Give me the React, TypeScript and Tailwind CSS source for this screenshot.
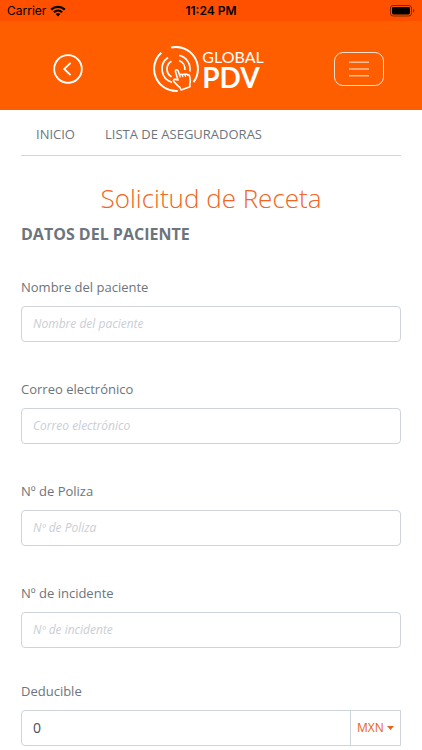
import React, { useState } from "react";

const fields = [
  { id: "nombre", label: "Nombre del paciente", type: "text" },
  { id: "correo", label: "Correo electrónico", type: "email" },
  { id: "poliza", label: "Nº de Poliza", type: "text" },
  { id: "incidente", label: "Nº de incidente", type: "text" },
];

const WifiIcon = () => (
  <svg className="w-4 h-3" viewBox="0 0 16 12" fill="none" stroke="currentColor" strokeWidth="2.2">
    <path d="M1.2 4.6a9.8 9.8 0 0 1 13.6 0" />
    <path d="M3.9 7.3a6 6 0 0 1 8.2 0" />
    <path d="M8 11.4 5.7 9.1a3.3 3.3 0 0 1 4.6 0Z" fill="currentColor" stroke="none" />
  </svg>
);

const BatteryIcon = () => (
  <svg className="w-[25px] h-3" viewBox="0 0 25 12" fill="none">
    <rect x="0.5" y="0.5" width="21" height="10.5" rx="2.6" stroke="#000" strokeOpacity="0.5" />
    <rect x="2" y="2" width="18" height="7.5" rx="1.4" fill="#000" />
    <path d="M23 4v3.6c.8-.3 1.3-1 1.3-1.8S23.8 4.3 23 4Z" fill="#000" fillOpacity="0.5" />
  </svg>
);

const TouchIcon = () => (
  <svg className="w-[46px] h-[46px]" viewBox="0 0 46 46" fill="none" stroke="white" strokeWidth="2">
    <path d="M18.1 1.5A22 22 0 0 1 40.5 36.2" />
    <path d="M24.7 44.9A22 22 0 0 1 8.3 6.7" />
    <path d="M19 36.4A14 14 0 0 1 15 11.5" strokeWidth="1.7" />
    <path d="M26.3 9.4A14 14 0 0 1 36.8 25.5" strokeWidth="1.7" />
    <path d="M18.5 30.8A9 9 0 0 1 18.5 15.2" strokeWidth="1.7" />
    <path d="M26 14.5A9 9 0 0 1 31.8 24" strokeWidth="1.7" />
    <path
      d="M25 34 22.4 25.6c-.4-1.8 2-2.5 2.7-.8l1.6 4.4c.6-1.2 2.2-1.1 2.7-.2.5-1 2.1-1.1 2.7-.3.7-.9 2.1-.7 2.5.3 1-.4 1.8.1 2 1.2l.7 3.8c.2 1.7-.3 3.2-.6 4.7l.3 2-8.9 3.3-1.2-2.7c-2.2-.8-3.6-3.3-5.8-5.4-1.3-1.4-.3-2.9 1.3-2.5Z"
      fill="#ff5e00"
      strokeWidth="1.6"
      strokeLinejoin="round"
    />
    <path d="m26.7 29.2.6 2.3M29.4 29l.6 2.1M32.1 28.7l.5 2.1" strokeWidth="1.2" />
  </svg>
);

const App = () => {
  const [currency, setCurrency] = useState("MXN");
  const [deducible, setDeducible] = useState("0");

  return (
    <div className="min-h-screen bg-white font-['Open_Sans',sans-serif] text-[#6c757d]">
      <div className="grid grid-cols-3 items-center h-[21px] px-[7px] bg-[#ff5000] font-['Inter',sans-serif] text-xs text-black">
        <div className="flex items-center gap-1">
          <span>Carrier</span>
          <WifiIcon />
        </div>
        <span className="text-center font-semibold">11:24 PM</span>
        <div className="flex justify-end">
          <BatteryIcon />
        </div>
      </div>

      <header className="flex items-center justify-between h-[89px] pt-[7px] pl-[53px] pr-[38px] bg-[#ff5e00] text-white">
        <button type="button" aria-label="Regresar">
          <svg className="w-[30px] h-[30px]" viewBox="0 0 30 30" fill="none" stroke="currentColor" strokeWidth="1.8">
            <circle cx="15" cy="15" r="13.8" />
            <path d="m17.6 8.8-6.4 6.2 6.4 6.2" />
          </svg>
        </button>
        <a href="#inicio" className="flex items-center gap-[3px]">
          <TouchIcon />
          <span className="flex flex-col font-['Lato',sans-serif]">
            <span className="text-base leading-4">GLOBAL</span>
            <span className="text-[28px] leading-6 font-bold">PDV</span>
          </span>
        </a>
        <button
          type="button"
          aria-label="Menú"
          className="flex items-center justify-center w-[50px] h-[34px] border border-white/80 rounded-[9px]"
        >
          <svg className="w-5 h-4" viewBox="0 0 20 16" stroke="white" strokeOpacity="0.6" strokeWidth="1.5">
            <path d="M0 1.3h20M0 8h20M0 14.7h20" />
          </svg>
        </button>
      </header>

      <main className="px-[21px] pb-1">
        <nav className="flex gap-[30px] h-[46px] px-[15px] pt-4 border-b border-gray-300 text-[13px] leading-4">
          <a href="#inicio">INICIO</a>
          <a href="#aseguradoras">LISTA DE ASEGURADORAS</a>
        </nav>

        <h1 className="mt-6 text-center text-[26px] leading-9 font-light text-[#f26522]">
          Solicitud de Receta
        </h1>
        <h2 className="mt-1.5 text-base leading-6 font-bold">DATOS DEL PACIENTE</h2>

        <form className="mt-[30px] text-[13px]">
          {fields.map((field) => (
            <div key={field.id} className="mb-9">
              <label htmlFor={field.id} className="block mb-2 leading-[22px]">
                {field.label}
              </label>
              <input
                id={field.id}
                type={field.type}
                placeholder={field.label}
                className="block w-full h-9 px-[11px] pb-0.5 border border-[#ced4da] rounded text-xs placeholder:italic placeholder:text-[#c9ced6]"
              />
            </div>
          ))}

          <div className="-mt-1">
            <label htmlFor="deducible" className="block mb-2 leading-[22px]">
              Deducible
            </label>
            <div className="flex h-9 border border-[#ced4da] rounded-l">
              <input
                id="deducible"
                type="text"
                value={deducible}
                onChange={(e) => setDeducible(e.target.value)}
                className="flex-1 min-w-0 px-[11px] text-sm text-[#495057]"
              />
              <div className="relative w-[50px] border-l border-[#ced4da] text-[#e8621e]">
                <select
                  aria-label="Moneda"
                  value={currency}
                  onChange={(e) => setCurrency(e.target.value)}
                  className="w-full h-full pl-[6px] appearance-none text-xs"
                >
                  <option value="MXN">MXN</option>
                  <option value="USD">USD</option>
                </select>
                <svg
                  className="absolute right-[6px] top-[15px] w-[7px] h-1 pointer-events-none"
                  viewBox="0 0 7 4"
                  fill="currentColor"
                >
                  <path d="M0 0h7L3.5 4Z" />
                </svg>
              </div>
            </div>
          </div>
        </form>
      </main>
    </div>
  );
};

export default App;
